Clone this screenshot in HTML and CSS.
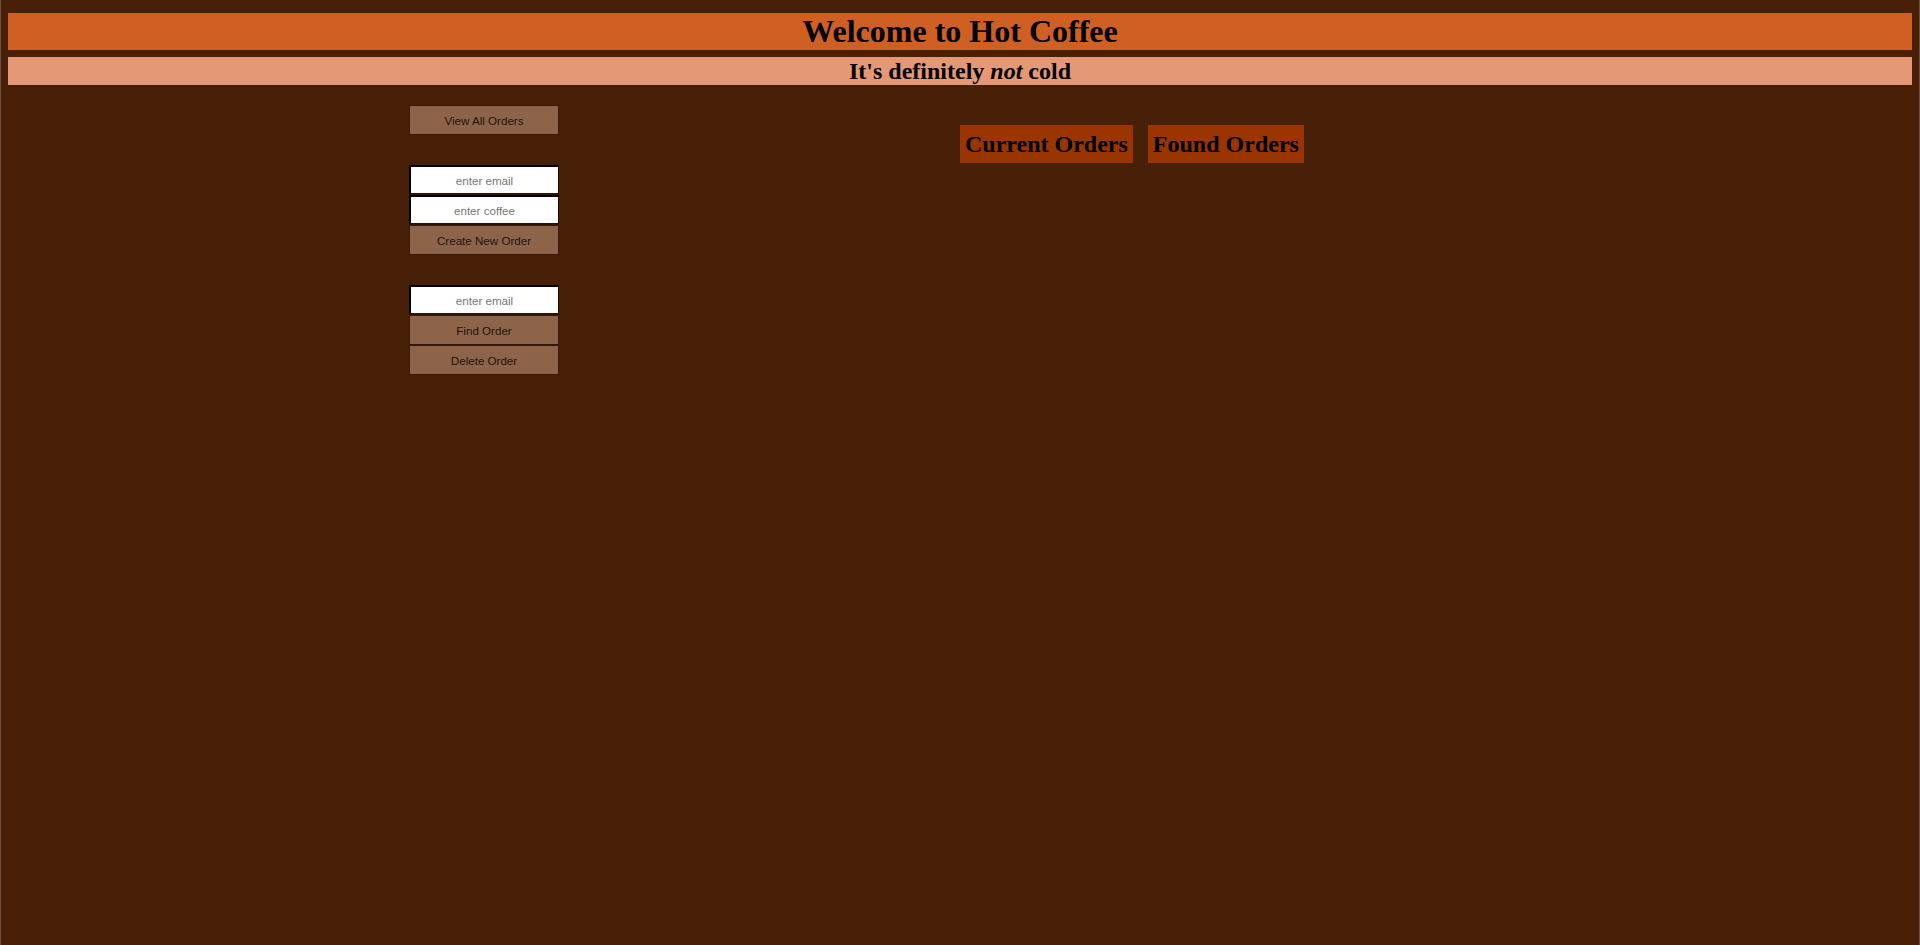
FILE: index.html
```html
<!DOCTYPE html>
<html lang="en">
<head>
<meta charset="utf-8">
<title>Hot Coffee</title>
<link rel="stylesheet" href="styles.css">
</head>
<body>
<header class="banner">
  <h1 class="title">Welcome to Hot Coffee</h1>
  <h2 class="subtitle">It's definitely <em>not</em> cold</h2>
</header>
<main class="main">
  <section class="controls">
    <div class="group">
      <button class="btn" type="button">View All Orders</button>
    </div>
    <div class="group">
      <input class="field" type="text" placeholder="enter email">
      <input class="field" type="text" placeholder="enter coffee">
      <button class="btn" type="button">Create New Order</button>
    </div>
    <div class="group">
      <input class="field" type="text" placeholder="enter email">
      <button class="btn" type="button">Find Order</button>
      <button class="btn" type="button">Delete Order</button>
    </div>
  </section>
  <section class="orders">
    <h2 class="orders-title">Current Orders</h2>
    <h2 class="orders-title">Found Orders</h2>
  </section>
</main>
</body>
</html>
```
FILE: styles.css
```css
html {
  min-height: 100%;
  background: #482008;
  box-shadow: inset 1px 0 0 #6e5242, inset -1px 0 0 #6e5242;
}

body {
  margin: 0 8px;
  font-family: "Liberation Serif", "Times New Roman", serif;
  color: #000;
}

.banner {
  display: flex;
  flex-direction: column;
}

.title {
  margin: 13px 0 7px;
  background: #cf5f22;
  font-size: 32px;
  line-height: 37px;
  font-weight: bold;
  text-align: center;
}

.subtitle {
  margin: 0;
  background: #e59876;
  font-size: 24px;
  line-height: 28px;
  font-weight: bold;
  text-align: center;
}

.subtitle em {
  font-style: italic;
}

.main {
  display: flex;
  align-items: flex-start;
  gap: 401px;
  margin-top: 20px;
  padding-left: 401px;
}

.controls {
  display: flex;
  flex-direction: column;
  gap: 30px;
  width: 150px;
}

.group {
  display: flex;
  flex-direction: column;
}

.btn,
.field {
  box-sizing: border-box;
  width: 150px;
  height: 30px;
  margin: 0;
  font-family: "Liberation Sans", Arial, sans-serif;
  font-size: 11.6px;
  text-align: center;
}

.btn {
  background: #8d6449;
  border: 1px solid #361606;
  color: #231208;
  padding: 0;
}

.field {
  background: #fff;
  border-style: solid;
  border-width: 2px 1px 2px 2px;
  border-color: #000 #1c0a02 #2e1407 #000;
  padding: 0 4px;
  color: #222;
}

.field::placeholder {
  color: #777;
}

.orders {
  display: flex;
  gap: 15px;
}

.orders-title {
  margin: 20px 0 0;
  padding: 5px;
  background: #9a3500;
  font-size: 24px;
  line-height: 28px;
  font-weight: bold;
}
```
